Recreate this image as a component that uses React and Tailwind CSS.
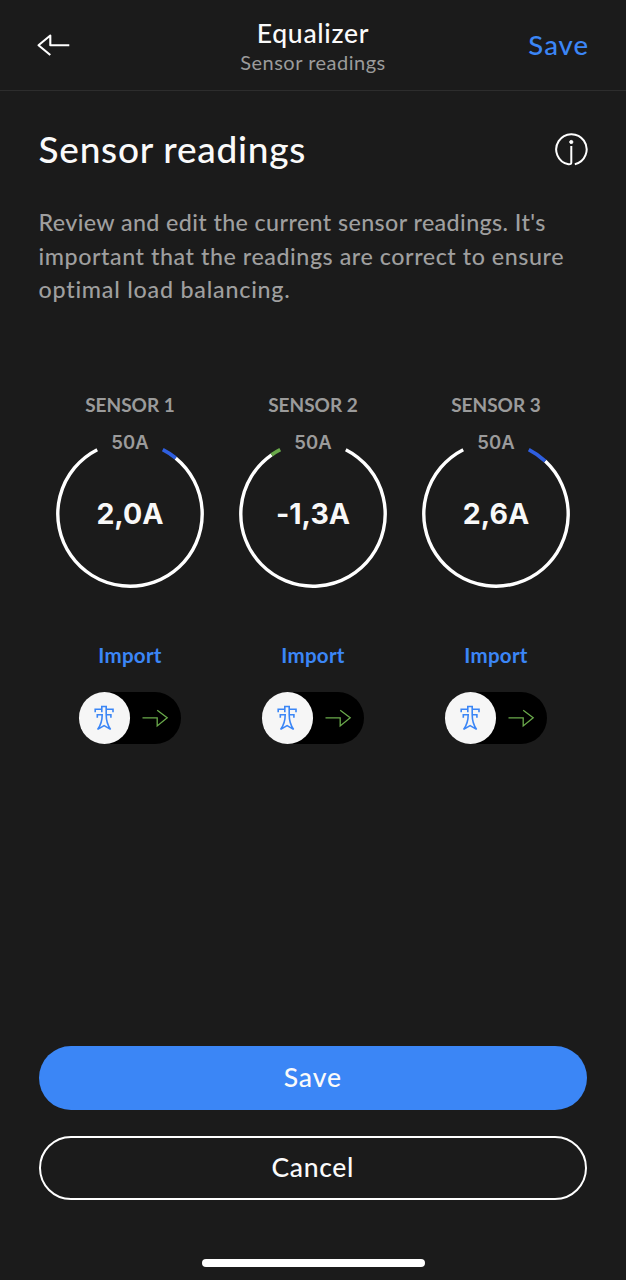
const UI = "font-['Lato','Open_Sans',sans-serif] [font-variant-ligatures:none]";
const NUM = "font-['Inter','Liberation_Sans',sans-serif]";

const sensors = [
  { name: 'SENSOR 1', max: 50, value: 2.0, label: '2,0A' },
  { name: 'SENSOR 2', max: 50, value: -1.3, label: '-1,3A' },
  { name: 'SENSOR 3', max: 50, value: 2.6, label: '2,6A' },
];

const GAP = 27;
const R = 72.2;

function arc(from, to) {
  const point = (deg) => {
    const a = (deg * Math.PI) / 180;
    return `${(74 + R * Math.sin(a)).toFixed(2)} ${(74 - R * Math.cos(a)).toFixed(2)}`;
  };
  return `M${point(from)}A${R} ${R} 0 ${to - from > 180 ? 1 : 0} 1 ${point(to)}`;
}

function Gauge({ max, value, label }) {
  const sweep = ((360 - 2 * GAP) * Math.abs(value)) / max;
  const end = 360 - GAP;
  const exporting = value < 0;
  const active = exporting ? arc(end - sweep, end) : arc(GAP, GAP + sweep);
  const rest = exporting ? arc(GAP, end - sweep) : arc(GAP + sweep, end);
  return (
    <div className="relative mt-[23px] flex h-[148px] w-[148px] items-center justify-center">
      <svg className="absolute inset-0" width="148" height="148" viewBox="0 0 148 148" fill="none">
        <path d={rest} stroke="#fff" strokeWidth="3.4" />
        <path d={active} stroke={exporting ? '#6aaa4b' : '#2f5fe0'} strokeWidth="3.8" />
      </svg>
      <span className={`${NUM} absolute top-[-10px] text-[18.5px] leading-6 font-semibold text-[#9b9b9b]`}>{max}A</span>
      <span className={`${NUM} text-[28.5px] leading-9 font-bold text-[#f8f8f8]`}>{label}</span>
    </div>
  );
}

function Toggle() {
  return (
    <button className="mt-[25px] flex h-[51.5px] w-[102.5px] items-center rounded-full bg-black">
      <span className="flex h-[51.5px] w-[51.5px] items-center justify-center rounded-full bg-[#f6f6f6]">
        <svg className="mr-px" width="22" height="26" viewBox="0 0 22 26" fill="none" stroke="#3b86f6" strokeWidth="1.6">
          <path d="M2.2 7.3V4.2H8.8V1.5H13.2V4.2H20V7.3M4.3 12.8V9.7H9.2C9.2 15.5 7.5 20.5 4.6 24.4L11.1 20.6L17.6 24.4C14.8 20.5 13.2 15.5 13.2 9.7H17.9V12.8M8.8 4.2V7.2M13.2 4.2V9.7" />
        </svg>
      </span>
      <svg className="ml-[12px]" width="28" height="20" viewBox="0 0 28 20" fill="none" stroke="#6aaa4b" strokeWidth="1.3">
        <path d="M.5 9.8H15.2V18L25.2 9.8L15.2 2.2" />
      </svg>
    </button>
  );
}

export default function App() {
  return (
    <div className={`${UI} flex h-[1280px] w-[626px] flex-col bg-[#1b1b1b] text-[#fafafa]`}>
      <header className="grid h-[91px] grid-cols-[1fr_auto_1fr] items-center border-b border-[#2d2d2d] px-[37px]">
        <button aria-label="Back">
          <svg width="34" height="24" viewBox="0 0 34 24" fill="none" stroke="#fff" strokeWidth="2.1" strokeLinejoin="round">
            <path d="M32.3 12.2H13.3V2.5L1.5 12.2L13.3 22" />
          </svg>
        </button>
        <div className="flex flex-col items-center pt-[2px]">
          <h1 className="text-[26.5px] leading-[31px] font-medium tracking-[0.7px]">Equalizer</h1>
          <p className="text-[20px] leading-[26px] tracking-[0.5px] text-[#9b9b9b]">Sensor readings</p>
        </div>
        <button className="justify-self-end text-[27.5px] leading-8 font-medium tracking-[1px] text-[#3b86f6]">Save</button>
      </header>

      <main className="flex flex-1 flex-col px-[38.5px]">
        <div className="mt-[36px] flex h-[44px] items-center justify-between">
          <h2 className="text-[37px] leading-[44px] font-medium tracking-[0.75px]">Sensor readings</h2>
          <svg width="33" height="33" viewBox="0 0 33 33" fill="none" stroke="#fff" strokeWidth="2">
            <path d="M16.3 13V29.5Q16.3 31.6 13.5 31.3A15.2 15.2 0 1 1 19.8 31.2" />
            <circle cx="16.3" cy="9" r="1.6" fill="#fff" strokeWidth="1" />
          </svg>
        </div>
        <p className="mt-[35px] text-[23.25px] leading-[33.7px] font-medium whitespace-nowrap text-[#9f9f9f]">
          <span className="block tracking-[0.4px]">Review and edit the current sensor readings. It's</span>
          <span className="block tracking-[0.56px]">important that the readings are correct to ensure</span>
          <span className="block tracking-[0.78px]">optimal load balancing.</span>
        </p>

        <div className="mt-[86px] grid grid-cols-3">
          {sensors.map((s) => (
            <section key={s.name} className="flex flex-col items-center">
              <h3 className="text-[19px] leading-6 font-bold text-[#9b9b9b]">{s.name}</h3>
              <Gauge {...s} />
              <span className="mt-[55px] text-[20.5px] leading-6 font-bold tracking-[0.3px] text-[#3b86f6]">Import</span>
              <Toggle />
            </section>
          ))}
        </div>

        <div className="mt-auto mr-[0.5px] flex flex-col gap-[26px]">
          <button className="h-[64px] rounded-full bg-[#3b86f6] text-[26.5px] font-medium tracking-[0.9px]">Save</button>
          <button className="h-[64px] rounded-full border-[2.5px] border-white text-[26.5px] font-medium tracking-[0.7px]">Cancel</button>
        </div>
        <div className="mt-[59.5px] mb-[13px] h-[8px] w-[223px] self-center rounded-full bg-white" />
      </main>
    </div>
  );
}
